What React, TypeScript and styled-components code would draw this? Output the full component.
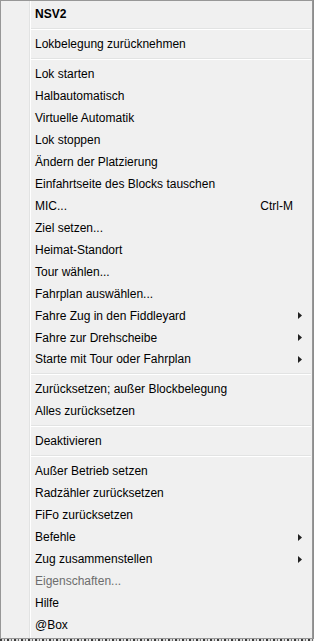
import styled, { createGlobalStyle } from "styled-components";

const GlobalStyle = createGlobalStyle`
  html, body {
    margin: 0;
    padding: 0;
    background: #8c8c8c;
  }
  body {
    width: 314px;
    height: 641px;
    overflow: hidden;
  }
`;

const Screen = styled.div`
  width: 314px;
  height: 641px;
  display: flex;
  flex-direction: column;
  background: #8c8c8c;
`;

const Menu = styled.div`
  width: 313px;
  height: 639px;
  border: 1px solid #979797;
  padding: 2px 0;
  box-sizing: border-box;
  display: flex;
  flex-direction: column;
  background: linear-gradient(
    to right,
    #f0f0f0 28px,
    #e2e3e3 28px 29px,
    #ffffff 29px 30px,
    #f0f0f0 30px
  );
  font-family: "Liberation Sans", Arial, sans-serif;
  font-size: 12px;
  color: #000;
`;

const BottomStrip = styled.div`
  flex: 1;
  background: repeating-linear-gradient(
    to right,
    #3c3c3c 0 2px,
    #d6d6d6 2px 4px,
    #6a6a6a 4px 5px,
    #e8e8e8 5px 7px
  );
`;

const Item = styled.div<{ $bold?: boolean; $disabled?: boolean }>`
  height: 22px;
  display: flex;
  align-items: center;
  padding-left: 34px;
  white-space: nowrap;
  font-weight: ${(p) => (p.$bold ? "bold" : "normal")};
  color: ${(p) => (p.$disabled ? "#6d6d6d" : "#000")};
`;

const Label = styled.span`
  flex: 1;
`;

const Shortcut = styled.span`
  flex: none;
`;

const ArrowCell = styled.span`
  width: 19px;
  flex: none;
  display: flex;
  align-items: center;
  padding-left: 5px;
  box-sizing: border-box;
`;

const Separator = styled.div`
  height: 8px;
  margin-left: 30px;
  margin-right: 1px;
  display: flex;
  flex-direction: column;
  justify-content: center;
  &::before {
    content: "";
    height: 1px;
    background: #e2e3e3;
  }
  &::after {
    content: "";
    height: 1px;
    background: #ffffff;
  }
`;

const SubArrow = () => (
  <svg width="4" height="7" viewBox="0 0 4 7">
    <path d="M0 0 L4 3.5 L0 7 Z" fill="#222" />
  </svg>
);

type Entry =
  | "sep"
  | { label: string; bold?: boolean; disabled?: boolean; shortcut?: string; sub?: boolean };

const entries: Entry[] = [
  { label: "NSV2", bold: true },
  "sep",
  { label: "Lokbelegung zurücknehmen" },
  "sep",
  { label: "Lok starten" },
  { label: "Halbautomatisch" },
  { label: "Virtuelle Automatik" },
  { label: "Lok stoppen" },
  { label: "Ändern der Platzierung" },
  { label: "Einfahrtseite des Blocks tauschen" },
  { label: "MIC...", shortcut: "Ctrl-M" },
  { label: "Ziel setzen..." },
  { label: "Heimat-Standort" },
  { label: "Tour wählen..." },
  { label: "Fahrplan auswählen..." },
  { label: "Fahre Zug in den Fiddleyard", sub: true },
  { label: "Fahre zur Drehscheibe", sub: true },
  { label: "Starte mit Tour oder Fahrplan", sub: true },
  "sep",
  { label: "Zurücksetzen; außer Blockbelegung" },
  { label: "Alles zurücksetzen" },
  "sep",
  { label: "Deaktivieren" },
  "sep",
  { label: "Außer Betrieb setzen" },
  { label: "Radzähler zurücksetzen" },
  { label: "FiFo zurücksetzen" },
  { label: "Befehle", sub: true },
  { label: "Zug zusammenstellen", sub: true },
  { label: "Eigenschaften...", disabled: true },
  { label: "Hilfe" },
  { label: "@Box" },
];

const App = () => {
  return (
    <>
      <GlobalStyle />
      <Screen>
        <Menu>
          {entries.map((e, i) =>
            e === "sep" ? (
              <Separator key={i} />
            ) : (
              <Item key={i} $bold={e.bold} $disabled={e.disabled}>
                <Label>{e.label}</Label>
                {e.shortcut && <Shortcut>{e.shortcut}</Shortcut>}
                <ArrowCell>{e.sub && <SubArrow />}</ArrowCell>
              </Item>
            )
          )}
        </Menu>
        <BottomStrip />
      </Screen>
    </>
  );
};

export default App;
